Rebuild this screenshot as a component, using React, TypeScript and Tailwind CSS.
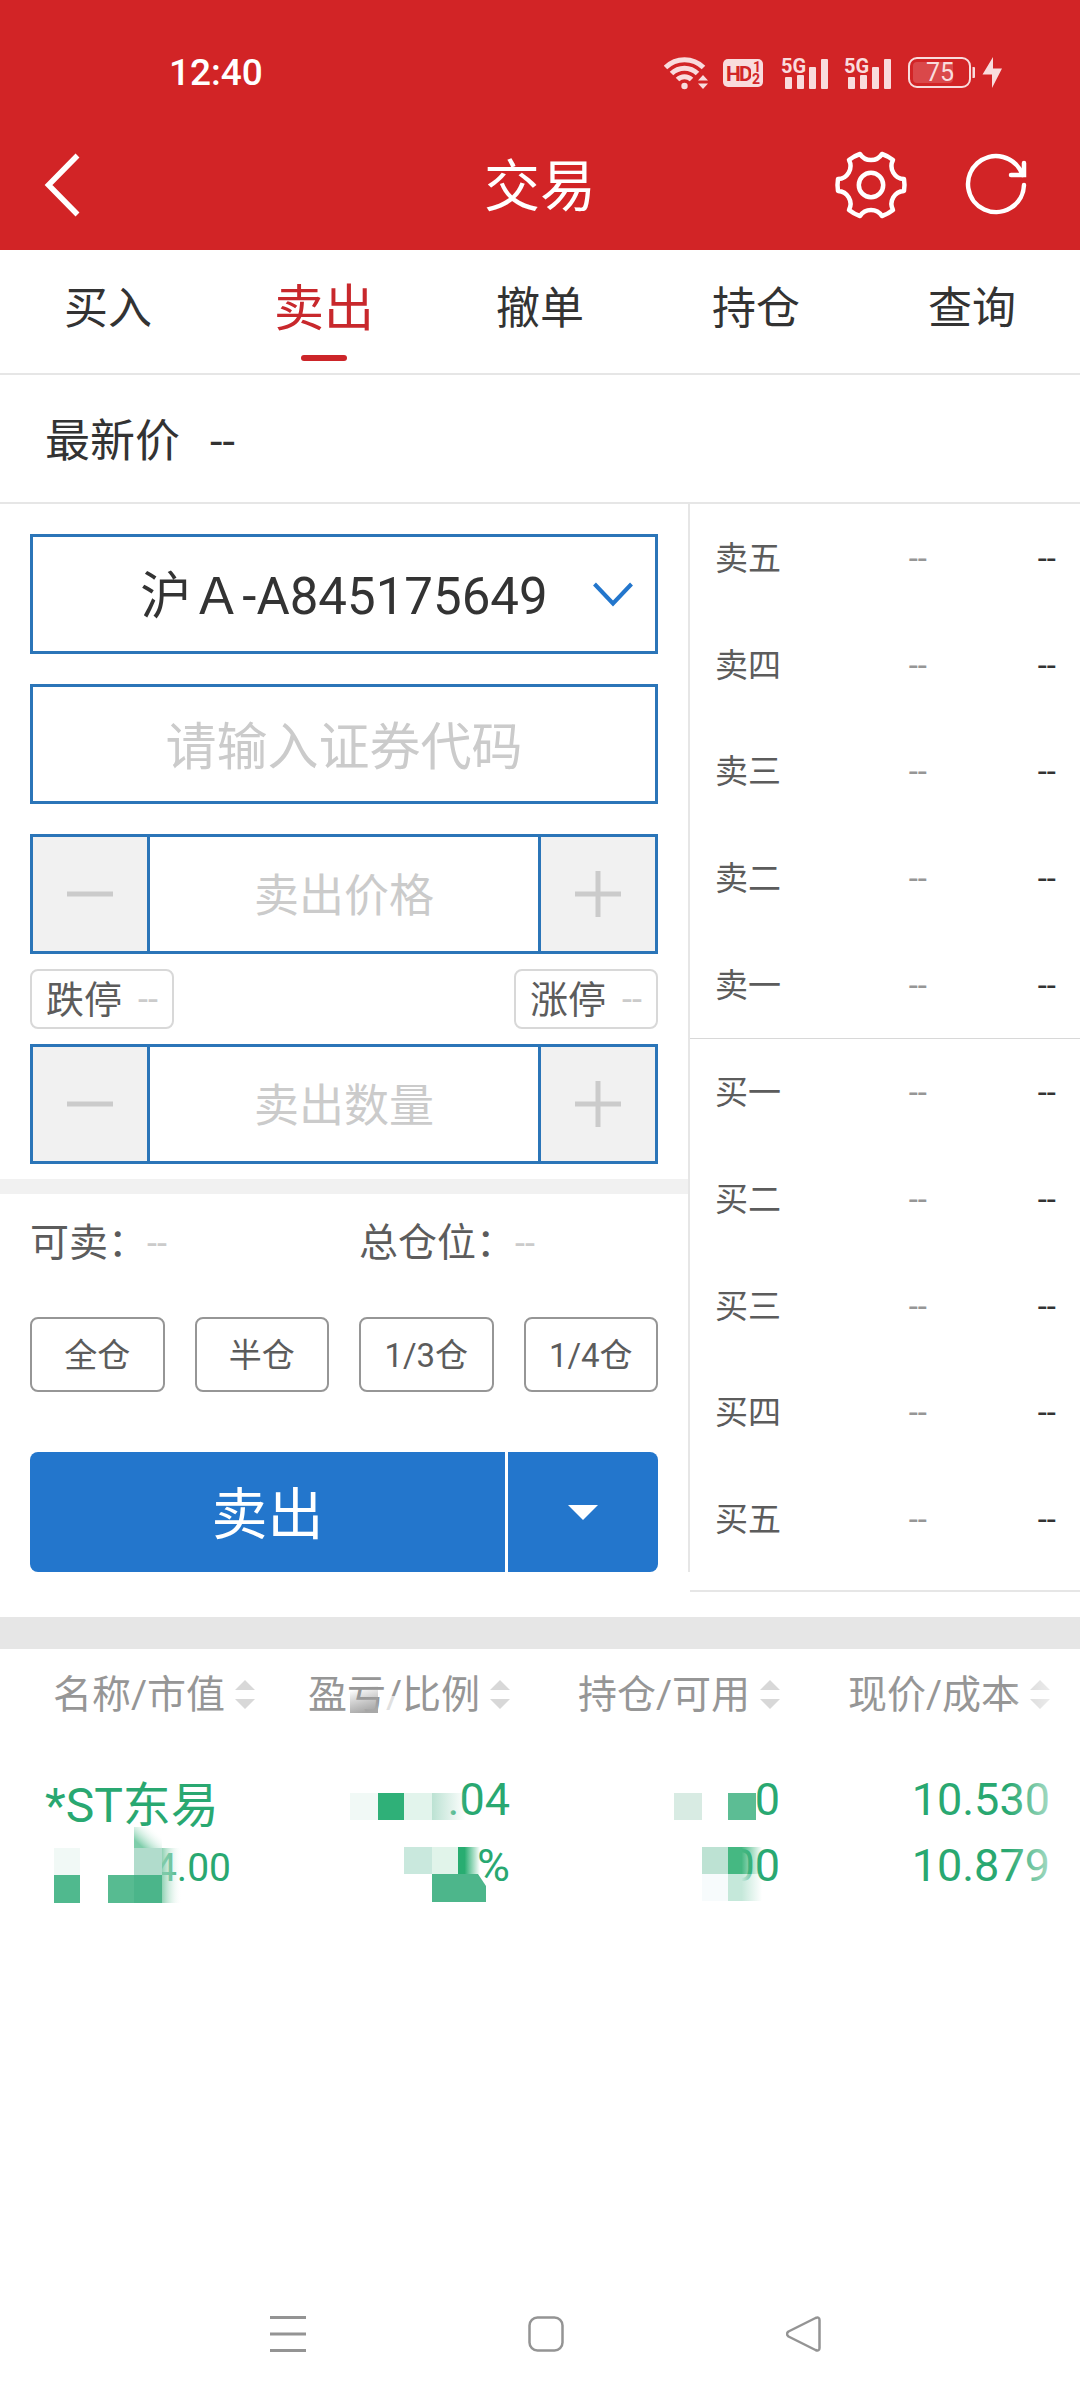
import type { ReactNode } from "react";

const TABS = ["买入", "卖出", "撤单", "持仓", "查询"];
const ASKS = ["卖五", "卖四", "卖三", "卖二", "卖一"];
const BIDS = ["买一", "买二", "买三", "买四", "买五"];
const POSITIONS = ["全仓", "半仓", "1/3仓", "1/4仓"];

function SignalBars({ label }: { label: string }) {
  return (
    <svg width="48" height="46" viewBox="0 -6 48 46" fill="currentColor" aria-label={label}>
      <text x="0" y="17" fontSize="20" fontWeight="700">
        5G
      </text>
      <rect x="4" y="21" width="7" height="12" rx="1" />
      <rect x="16" y="19" width="7" height="14" rx="1" />
      <rect x="28" y="11" width="7" height="22" rx="1" />
      <rect x="40" y="3" width="7" height="30" rx="1" />
    </svg>
  );
}

function StatusBar() {
  return (
    <div className="flex h-[112px] items-center justify-between pr-[76px] pl-[169px] pt-[34px]">
      <span className="text-[37px] leading-10 font-medium">12:40</span>
      <div className="flex items-center text-[#f9dcdd]">
        <svg width="46" height="36" viewBox="0 0 46 36" fill="none" stroke="currentColor" strokeWidth="5" aria-label="Wi-Fi">
          <path d="M1.5 12.5a27 27 0 0 1 38 0M7.5 18.5a18.5 18.5 0 0 1 26 0M13.5 24.5a10 10 0 0 1 14 0" />
          <circle cx="20.5" cy="31" r="3.2" fill="currentColor" stroke="none" />
          <path d="M34 25.5l5-5.5 5 5.5zM34 28.5h10l-5 5.5z" fill="currentColor" stroke="none" />
        </svg>
        <svg className="ml-3" width="42" height="30" viewBox="0 0 42 30" aria-label="HD">
          <rect x="1" y="1" width="40" height="28" rx="5" fill="currentColor" />
          <g fill="#d12527" fontWeight="700">
            <text x="4" y="23" fontSize="21">H</text>
            <text x="17" y="23" fontSize="21">D</text>
            <rect x="29" y="3" width="11" height="24" fill="#f9dcdd" />
            <text x="31" y="14" fontSize="14">1</text>
            <text x="30" y="26" fontSize="14">2</text>
          </g>
        </svg>
        <div className="ml-[17px] flex gap-[15px]">
          <SignalBars label="SIM 1" />
          <SignalBars label="SIM 2" />
        </div>
        <svg className="ml-4" width="96" height="32" viewBox="0 0 96 32" aria-label="75%">
          <rect x="1" y="1" width="61" height="29" rx="8" fill="none" stroke="currentColor" strokeWidth="2" />
          <rect x="5" y="5" width="40" height="21" rx="4" fill="currentColor" opacity="0.2" />
          <path d="M64.5 10h1.5a1 1 0 0 1 1 1v9a1 1 0 0 1-1 1h-1.5z" fill="currentColor" />
          <text x="18" y="24" fontSize="25" fill="currentColor">75</text>
          <path d="M85 0 74.5 17.5h9.5v13.5L94 11.5h-9z" fill="currentColor" />
        </svg>
      </div>
    </div>
  );
}

function TitleBar() {
  return (
    <div className="grid grid-cols-3 items-center px-[44px] pt-[37px] pb-[29px]">
      <button type="button" aria-label="返回" className="justify-self-start">
        <svg width="38" height="66" viewBox="0 0 38 66" fill="none" stroke="currentColor" strokeWidth="5.5">
          <path d="M33.5 3.5 4.5 33l29 29.5" />
        </svg>
      </button>
      <h1 className="pt-1 text-center text-[56px] leading-[68px]">交易</h1>
      <div className="flex items-center gap-[56px] justify-self-end pr-2">
        <button type="button" aria-label="设置">
          <svg width="74" height="70" viewBox="-37 -35 74 70" fill="none" stroke="currentColor" strokeWidth="4.5" strokeLinejoin="round">
            <path d="M-11-31A13 13 0 0 0 11-31Q17-29 22-25A13 13 0 0 0 33-6Q34 0 33 6A13 13 0 0 0 22 25Q17 29 11 31A13 13 0 0 0-11 31Q-17 29-22 25A13 13 0 0 0-33 6Q-34 0-33-6A13 13 0 0 0-22-25Q-17-29-11-31Z" />
            <circle r="12.2" />
          </svg>
        </button>
        <button type="button" aria-label="刷新">
          <svg width="64" height="64" viewBox="-32 -32 64 64" fill="none" stroke="currentColor" strokeWidth="4.5" strokeLinecap="round">
            <path d="M28 0A28 28 0 1 1 26.5-10" />
            <path d="M28-22V-10H15" />
          </svg>
        </button>
      </div>
    </div>
  );
}

function Tabs() {
  return (
    <nav className="grid h-[125px] grid-cols-5 border-b-2 border-[#e6e6e6]">
      {TABS.map((tab) => (
        <a
          key={tab}
          href="#"
          className={
            tab === "卖出"
              ? "flex flex-col items-center pt-[25px] text-[50px] leading-[68px] text-[#c8282c]"
              : "flex flex-col items-center pt-[25px] text-[44px] leading-[68px]"
          }
        >
          {tab}
          {tab === "卖出" && <span className="mt-3 h-[6px] w-[46px] rounded-full bg-[#cc2529]" />}
        </a>
      ))}
    </nav>
  );
}

function Stepper({ id, label }: { id: string; label: string }) {
  return (
    <div className="flex h-[120px] border-3 border-[#2b75b8]">
      <button type="button" aria-label="减少" className="flex w-[117px] items-center justify-center border-r-3 border-[#2b75b8] bg-[#f1f1f1]">
        <svg width="46" height="46" stroke="#cbcbcb" strokeWidth="5">
          <path d="M0 23h46" />
        </svg>
      </button>
      <input
        id={id}
        aria-label={label}
        placeholder={label}
        className="min-w-0 flex-1 pt-[6px] text-center text-[45px] outline-none placeholder:text-[#cbcbcb]"
      />
      <button type="button" aria-label="增加" className="flex w-[117px] items-center justify-center border-l-3 border-[#2b75b8] bg-[#f1f1f1]">
        <svg width="46" height="46" stroke="#cbcbcb" strokeWidth="5">
          <path d="M0 23h46M23 0v46" />
        </svg>
      </button>
    </div>
  );
}

function LimitTag({ label }: { label: string }) {
  return (
    <button type="button" className="flex h-[60px] items-center gap-4 rounded-lg border-2 border-[#d8d8d8] px-[14px] pt-[2px] text-[38px] leading-[56px] text-[#5c5c5c]">
      {label}
      <span className="text-[36px] text-[#cbcbcb]">--</span>
    </button>
  );
}

function OrderForm() {
  return (
    <form className="border-r-2 border-[#e6e6e6]">
      <div className="px-[30px] pt-[30px] pb-[15px]">
        <div className="relative">
          <select
            aria-label="股东账户"
            className="h-[120px] w-full appearance-none border-3 border-[#2b75b8] pt-[6px] text-center text-[51px] outline-none [text-align-last:center]"
          >
            <option>沪Ａ-A845175649</option>
          </select>
          <svg className="pointer-events-none absolute top-[47px] right-[24px]" width="42" height="28" viewBox="0 0 42 28" fill="none" stroke="#2376cc" strokeWidth="4">
            <path d="M2.5 3 21 22.5 39.5 3" />
          </svg>
        </div>
        <input
          aria-label="证券代码"
          placeholder="请输入证券代码"
          className="mt-[30px] mb-[30px] block h-[120px] w-full border-3 border-[#2b75b8] pt-[6px] text-center text-[51px] outline-none placeholder:text-[#cbcbcb]"
        />
        <Stepper id="price" label="卖出价格" />
        <div className="my-[15px] flex justify-between">
          <LimitTag label="跌停" />
          <LimitTag label="涨停" />
        </div>
        <Stepper id="amount" label="卖出数量" />
      </div>

      <div className="h-[15px] bg-[#f1f1f1]" />

      <div className="px-[30px]">
        <div className="grid grid-cols-2 gap-x-[30px] pt-[21px] pb-[19px] text-[39px] leading-[56px] text-[#5c5c5c]">
          <span>
            可卖：<span className="text-[36px] text-[#cbcbcb]">--</span>
          </span>
          <span>
            总仓位：<span className="text-[36px] text-[#cbcbcb]">--</span>
          </span>
        </div>
        <div className="mt-[26px] grid grid-cols-4 gap-[30px]">
          {POSITIONS.map((p) => (
            <button key={p} type="button" className="h-[75px] rounded-lg border-2 border-[#969696] pt-[2px] text-[33px] text-[#5c5c5c]">
              {p}
            </button>
          ))}
        </div>
        <div className="mt-[60px] flex h-[120px] gap-[3px] text-white">
          <button type="submit" className="flex-1 rounded-l-lg bg-[#2376cc] pt-[6px] text-[56px]">
            卖出
          </button>
          <button type="button" aria-label="更多" className="flex w-[150px] items-center justify-center rounded-r-lg bg-[#2376cc]">
            <svg width="30" height="15" fill="currentColor">
              <path d="M0 0h30L15 15z" />
            </svg>
          </button>
        </div>
      </div>
    </form>
  );
}

function Quotes({ levels }: { levels: string[] }) {
  return (
    <ul className="flex flex-1 flex-col">
      {levels.map((level) => (
        <li key={level} className="grid flex-1 grid-cols-[1fr_129px] items-center pt-[3px] pr-[24px] pl-[25px] text-[33px] leading-[48px]">
          <span className="flex items-center justify-between text-[#5c5c5c]">
            {level}
            <span className="text-[#969696]">--</span>
          </span>
          <span className="text-right">--</span>
        </li>
      ))}
    </ul>
  );
}

function SortHead({ children, light, className }: { children: ReactNode; light?: boolean; className?: string }) {
  return (
    <th scope="col" className={`relative p-0 font-normal ${className ?? ""}`}>
      <button type="button" className="ml-auto flex items-center gap-[10px]">
        {children}
        <svg width="20" height="30" className={light ? "fill-[#d0d0d0]" : "fill-[#d8d8d8]"}>
          <path d="M0 10 10 0l10 10zM0 19h20L10 29z" />
        </svg>
      </button>
    </th>
  );
}

function Holdings() {
  return (
    <div className="relative pr-[30px]">
      <table className="w-full table-fixed text-right text-[45px] leading-[66px] text-[#29a871]">
        <thead className="text-[39px] leading-[92px] text-[#969696]">
          <tr>
            <SortHead className="w-[255px]">名称/市值</SortHead>
            <SortHead className="w-[255px]">
              盈亏/比例
              <svg className="absolute top-[33px] right-[106px]" width="56" height="34">
                <defs>
                  <linearGradient id="smudge" x1="0.2" y1="0" x2="0.5" y2="1">
                    <stop offset="0.1" stopColor="#969696" stopOpacity="0" />
                    <stop offset="1" stopColor="#a8a8a8" />
                  </linearGradient>
                </defs>
                <path d="M2 4h28v27H2z" fill="url(#smudge)" />
                <path d="M32 14h16v20H32z" fill="#fff" opacity="0.7" />
              </svg>
            </SortHead>
            <SortHead>持仓/可用</SortHead>
            <SortHead light>现价/成本</SortHead>
          </tr>
        </thead>
        <tbody>
          <tr>
            <td className="relative p-0 pt-[34px] pl-[45px] text-left">
              <div className="text-[48px] leading-[62px] whitespace-nowrap">*ST东易</div>
              <div className="pr-[24px] text-right text-[39px] leading-[62px]">4.00</div>
              <svg className="absolute top-[86px] left-[54px]" width="140" height="76">
                <defs>
                  <linearGradient id="fade-a" x1="0" y1="1" x2="1" y2="0.2">
                    <stop offset="0.2" stopColor="#7fceab" />
                    <stop offset="0.9" stopColor="#fff" stopOpacity="0" />
                  </linearGradient>
                  <linearGradient id="fade-b">
                    <stop offset="0" stopColor="#84cdac" stopOpacity="0.9" />
                    <stop offset="1" stopColor="#fff" stopOpacity="0" />
                  </linearGradient>
                </defs>
                <path d="M0 21h26v27H0z" fill="#f1f9f6" />
                <path d="M0 48h26v28H0z" fill="#50b98e" />
                <path d="M54 48h26v28H54z" fill="#57bb91" />
                <path d="M80 48h28v28H80z" fill="#4bb58a" />
                <path d="M80 0h28v21H80z" fill="url(#fade-a)" />
                <path d="M80 21h28v27H80z" fill="#b1dccc" />
                <path d="M108 21h20v55h-20z" fill="url(#fade-b)" />
              </svg>
            </td>
            <td className="relative p-0 pt-[26px]">
              <div>.04</div>
              <div>%</div>
              <svg className="absolute top-[52px] right-0" width="160" height="109">
                <defs>
                  <linearGradient id="fade-c">
                    <stop offset="0.3" stopColor="#28ad71" />
                    <stop offset="1" stopColor="#28ad71" stopOpacity="0" />
                  </linearGradient>
                  <linearGradient id="fade-d">
                    <stop offset="0" stopColor="#bce2d3" />
                    <stop offset="1" stopColor="#bce2d3" stopOpacity="0" />
                  </linearGradient>
                </defs>
                <path d="M0 0h28v27H0z" fill="#f1f9f6" />
                <path d="M28 0h26v27H28z" fill="#2fb078" />
                <path d="M54 0h28v27H54z" fill="#e2f4ec" />
                <path d="M82 0h34v27H82z" fill="url(#fade-d)" />
                <path d="M54 54h28v27H54z" fill="#c9e8dd" />
                <path d="M82 54h26v27H82z" fill="#e1f4ea" />
                <path d="M108 54h22v27h-22z" fill="url(#fade-c)" />
                <path d="M82 81h46l8 12v16H82z" fill="#4db68b" />
              </svg>
            </td>
            <td className="relative p-0 pt-[26px]">
              <div>0</div>
              <div>00</div>
              <svg className="absolute top-[52px] right-[18px]" width="90" height="109">
                <defs>
                  <linearGradient id="fade-e">
                    <stop offset="0.4" stopColor="#45b882" />
                    <stop offset="1" stopColor="#45b882" stopOpacity="0" />
                  </linearGradient>
                  <linearGradient id="fade-f">
                    <stop offset="0.4" stopColor="#c5e8da" />
                    <stop offset="1" stopColor="#c5e8da" stopOpacity="0" />
                  </linearGradient>
                </defs>
                <path d="M2 0h28v27H2z" fill="#d8ebe3" />
                <path d="M56 0h28v27H56z" fill="#5cbd94" />
                <path d="M30 54h26v27H30z" fill="#bde2d3" />
                <path d="M56 54h34v27H56z" fill="url(#fade-e)" />
                <path d="M30 81h26v27H30z" fill="#f7fbfc" />
                <path d="M56 81h34v27H56z" fill="url(#fade-f)" />
              </svg>
            </td>
            <td className="p-0 pt-[26px]">
              <div>10.530</div>
              <div>10.879</div>
            </td>
          </tr>
        </tbody>
      </table>
      <div className="pointer-events-none absolute inset-y-0 right-0 w-[72px] bg-linear-to-l from-white to-transparent" />
    </div>
  );
}

function SystemNav() {
  return (
    <nav className="mt-auto flex justify-center gap-[222px] pb-[48px] pl-3 text-[#949494]">
      <button type="button" aria-label="最近任务">
        <svg width="36" height="36" stroke="currentColor" strokeWidth="3">
          <path d="M0 1.5h36M0 18h36M0 34.5h36" />
        </svg>
      </button>
      <button type="button" aria-label="主页">
        <svg width="36" height="36" fill="none" stroke="currentColor" strokeWidth="2.5">
          <rect x="1.5" y="1.5" width="33" height="33" rx="8" />
        </svg>
      </button>
      <button type="button" aria-label="后退">
        <svg width="36" height="36" fill="none" stroke="currentColor" strokeWidth="2.5" strokeLinejoin="round">
          <path d="M2.5 15.5 29.5 2q4-1.5 4 2v28q0 3.5-4 2L2.5 20.5q-3-2.5 0-5z" />
        </svg>
      </button>
    </nav>
  );
}

export default function App() {
  return (
    <div className="flex min-h-screen flex-col bg-white font-[Roboto,'Noto_Sans_CJK_SC',sans-serif] text-[#333]">
      <header className="bg-[#d22426] text-white">
        <StatusBar />
        <TitleBar />
      </header>
      <Tabs />
      <div className="flex items-center gap-[30px] border-b-2 border-[#e6e6e6] px-[45px] pt-[33px] pb-[27px] text-[45px] leading-[67px]">
        <span>最新价</span>
        <span>--</span>
      </div>
      <main className="grid grid-cols-[minmax(0,690fr)_minmax(0,390fr)]">
        <OrderForm />
        <section className="flex flex-col">
          <Quotes levels={ASKS} />
          <div className="h-px bg-[#d8d8d8]" />
          <Quotes levels={BIDS} />
        </section>
        <div className="col-start-2 h-5 border-b-2 border-[#e6e6e6]" />
      </main>
      <div className="mt-[25px] h-[32px] bg-[#e6e6e6]" />
      <Holdings />
      <SystemNav />
    </div>
  );
}
